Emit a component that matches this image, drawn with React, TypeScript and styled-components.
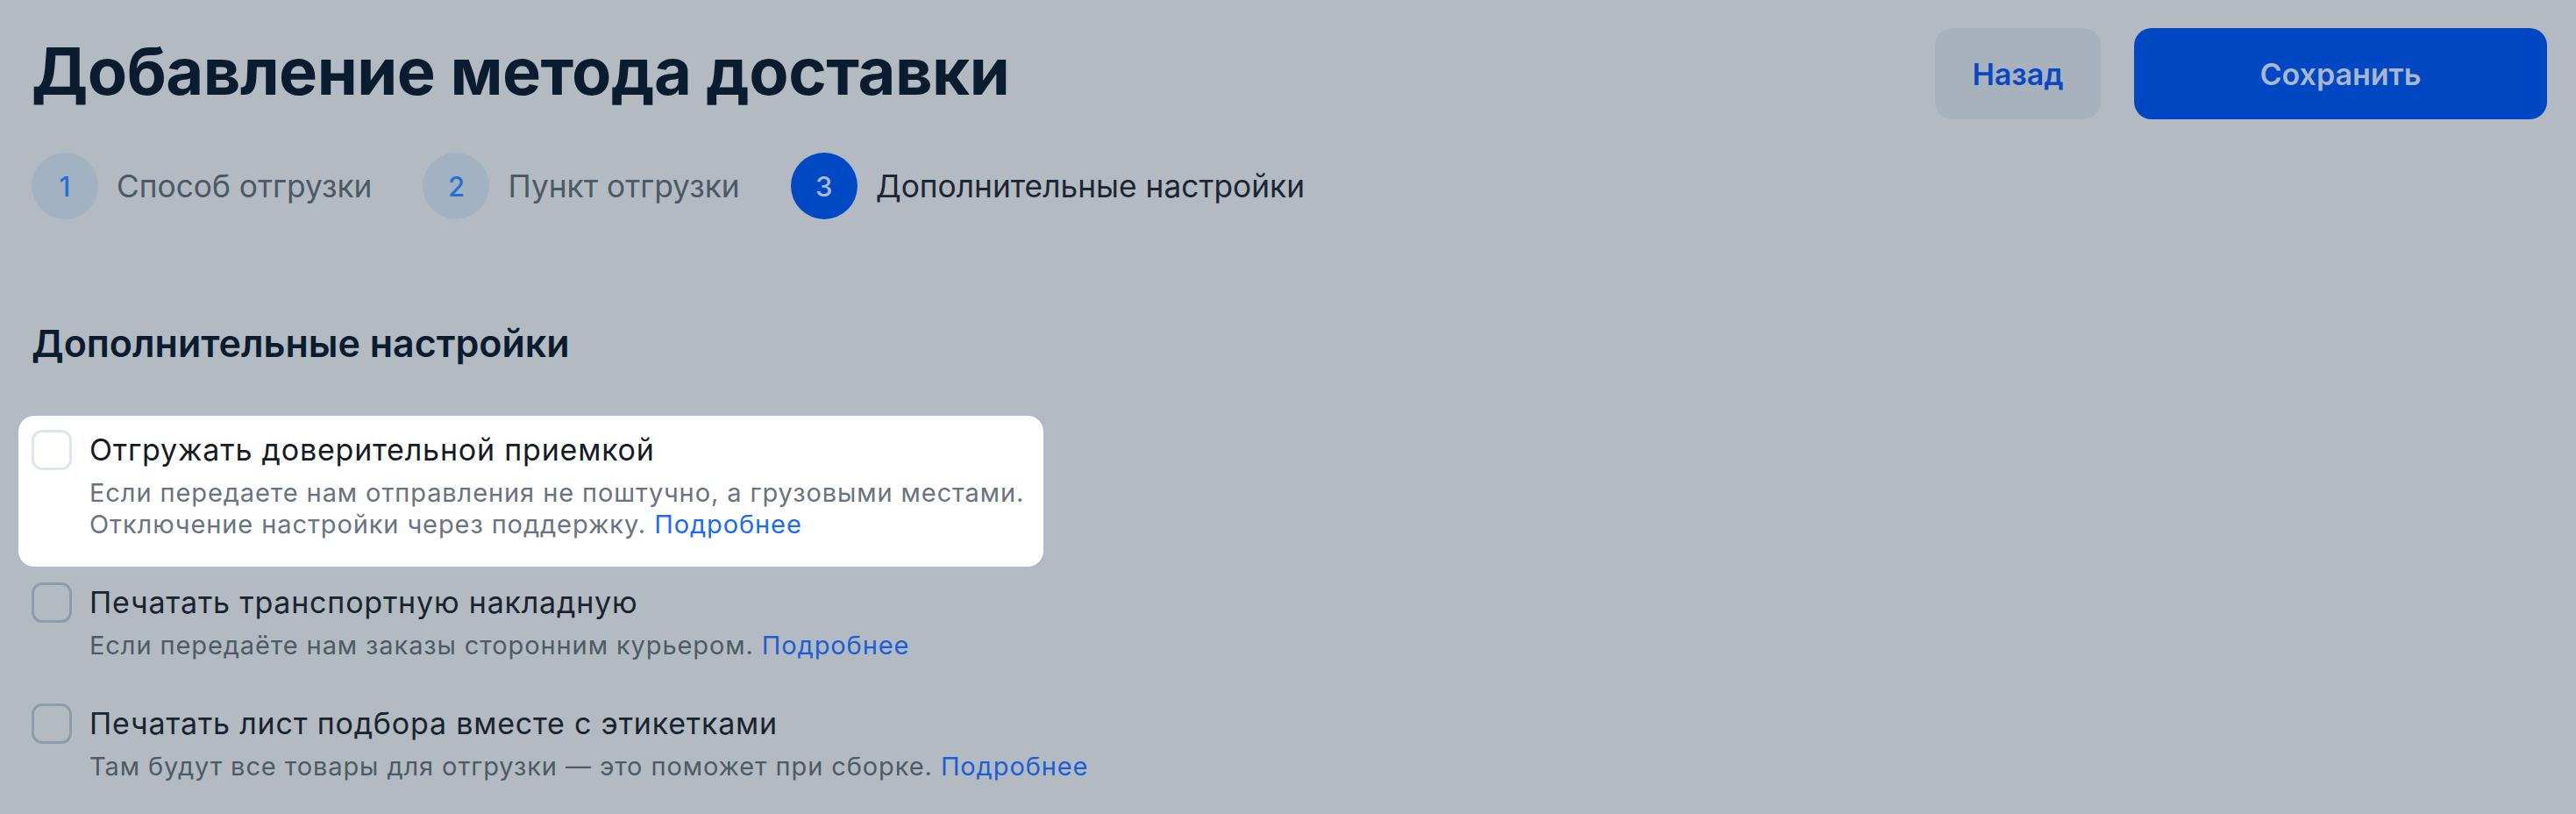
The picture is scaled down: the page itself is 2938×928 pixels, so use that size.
import styled, { createGlobalStyle } from 'styled-components';

const GlobalStyle = createGlobalStyle`
  html, body {
    margin: 0;
    padding: 0;
    background: #b3bac2;
  }
  body {
    font-family: Inter, "Noto Sans", "Liberation Sans", sans-serif;
    -webkit-font-smoothing: antialiased;
  }
`;

const Page = styled.div`
  min-height: 928px;
  box-sizing: border-box;
  padding: 32px 33px 0 36px;
  background: #b3bac2;
`;

const Header = styled.div`
  display: flex;
  justify-content: space-between;
  align-items: flex-start;
`;

const Title = styled.h1`
  margin: 4px 0 0;
  font-size: 74px;
  line-height: 90px;
  font-weight: 700;
  color: #0b1c30;
  letter-spacing: -0.5px;
`;

const Actions = styled.div`
  display: flex;
  gap: 38px;
`;

const Button = styled.button<{ $primary?: boolean; $width: number }>`
  width: ${(p) => p.$width}px;
  height: 104px;
  border: none;
  border-radius: 20px;
  font-family: inherit;
  font-size: 34px;
  font-weight: 600;
  background: ${(p) => (p.$primary ? '#0047c3' : '#a8b2bd')};
  color: ${(p) => (p.$primary ? '#a9b6cc' : '#0a47c2')};
  cursor: pointer;
`;

const Stepper = styled.div`
  display: flex;
  align-items: center;
  gap: 58px;
  margin-top: 38px;
`;

const Step = styled.div`
  display: flex;
  align-items: center;
  gap: 21px;
`;

const StepCircle = styled.span<{ $active?: boolean }>`
  width: 76px;
  height: 76px;
  border-radius: 50%;
  display: flex;
  align-items: center;
  justify-content: center;
  font-size: 31px;
  font-weight: 500;
  background: ${(p) => (p.$active ? '#0049c4' : '#a2b2c3')};
  color: ${(p) => (p.$active ? '#aab8d0' : '#1f74d0')};
`;

const StepLabel = styled.span<{ $active?: boolean }>`
  font-size: 35.3px;
  color: ${(p) => (p.$active ? '#1c2733' : '#4d5966')};
`;

const SectionTitle = styled.h2`
  margin: 113px 0 0;
  font-size: 43px;
  line-height: 56px;
  font-weight: 600;
  color: #0b1c30;
`;

const OptionList = styled.div`
  display: flex;
  flex-direction: column;
  align-items: flex-start;
  gap: 48px;
  margin-top: 71px;
`;

const Spotlight = styled.div`
  margin: -16px -22px -30px -15px;
  padding: 16px 22px 30px 15px;
  background: #ffffff;
  border-radius: 18px;
`;

const Option = styled.label`
  display: flex;
  align-items: flex-start;
  gap: 20px;
`;

const Box = styled.span<{ $lit?: boolean }>`
  flex: none;
  width: 46px;
  height: 46px;
  box-sizing: border-box;
  border-radius: 12px;
  border: 3.5px solid ${(p) => (p.$lit ? '#dfe6ee' : '#8e9bab')};
  background: ${(p) => (p.$lit ? '#ffffff' : 'transparent')};
`;

const OptionText = styled.div`
  display: flex;
  flex-direction: column;
`;

const OptionLabel = styled.span<{ $lit?: boolean }>`
  font-size: 34px;
  line-height: 46px;
  letter-spacing: 0.8px;
  color: ${(p) => (p.$lit ? '#161c24' : '#1a2430')};
`;

const OptionHint = styled.p<{ $lit?: boolean }>`
  margin: 8px 0 0;
  font-size: 29px;
  line-height: 36px;
  letter-spacing: 0.9px;
  color: ${(p) => (p.$lit ? '#6a7380' : '#4e5a66')};
`;

const More = styled.a<{ $lit?: boolean }>`
  color: ${(p) => (p.$lit ? '#1a6cf5' : '#1c5ed6')};
  text-decoration: none;
`;

const steps = ['Способ отгрузки', 'Пункт отгрузки', 'Дополнительные настройки'];

const options = [
  {
    label: 'Отгружать доверительной приемкой',
    hint: ['Если передаете нам отправления не поштучно, а грузовыми местами.', 'Отключение настройки через поддержку.'],
    lit: true,
  },
  {
    label: 'Печатать транспортную накладную',
    hint: ['Если передаёте нам заказы сторонним курьером.'],
  },
  {
    label: 'Печатать лист подбора вместе с этикетками',
    hint: ['Там будут все товары для отгрузки — это поможет при сборке.'],
  },
];

const OptionRow = ({ label, hint, lit }: { label: string; hint: string[]; lit?: boolean }) => (
  <Option>
    <Box $lit={lit} />
    <OptionText>
      <OptionLabel $lit={lit}>{label}</OptionLabel>
      <OptionHint $lit={lit}>
        {hint.map((line, i) =>
          i < hint.length - 1 ? (
            <span key={i}>
              {line}
              <br />
            </span>
          ) : (
            <span key={i}>
              {line} <More $lit={lit} href="#">Подробнее</More>
            </span>
          )
        )}
      </OptionHint>
    </OptionText>
  </Option>
);

export default function App() {
  return (
    <>
      <GlobalStyle />
      <Page>
        <Header>
          <Title>Добавление метода доставки</Title>
          <Actions>
            <Button $width={189}>Назад</Button>
            <Button $primary $width={471}>Сохранить</Button>
          </Actions>
        </Header>

        <Stepper>
          {steps.map((s, i) => (
            <Step key={s}>
              <StepCircle $active={i === 2}>{i + 1}</StepCircle>
              <StepLabel $active={i === 2}>{s}</StepLabel>
            </Step>
          ))}
        </Stepper>

        <SectionTitle>Дополнительные настройки</SectionTitle>

        <OptionList>
          {options.map((o) =>
            o.lit ? (
              <Spotlight key={o.label}>
                <OptionRow {...o} />
              </Spotlight>
            ) : (
              <OptionRow key={o.label} {...o} />
            )
          )}
        </OptionList>
      </Page>
    </>
  );
}
